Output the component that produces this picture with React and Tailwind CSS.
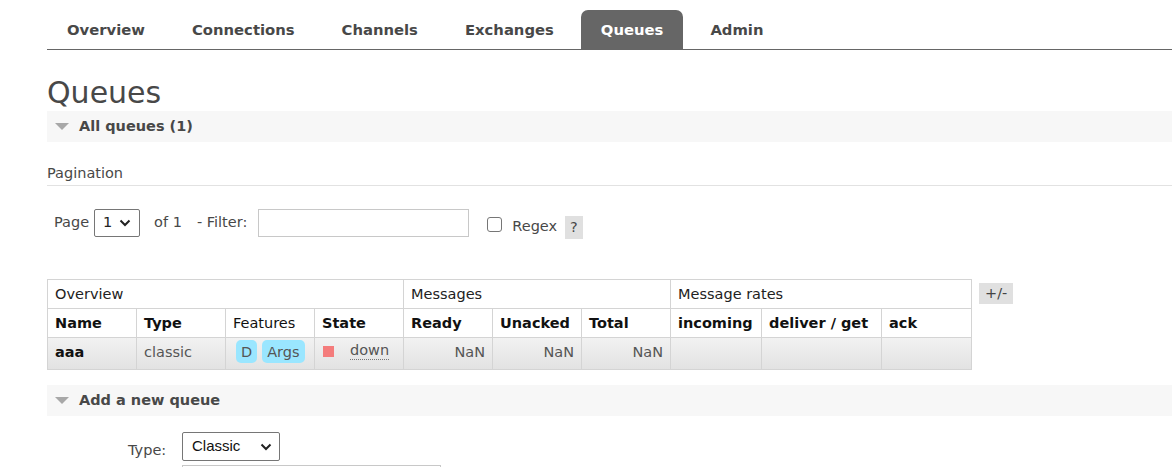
import React from 'react';

const tabs = ['Overview', 'Connections', 'Channels', 'Exchanges', 'Queues', 'Admin'];

const Triangle = () => (
  <svg width="14" height="9" viewBox="0 0 14 9" className="shrink-0">
    <polygon points="0,1 14,1 7,8" fill="#a8a8a8" />
  </svg>
);

const SectionHeader = ({ title }) => (
  <div className="flex items-center gap-[10px] h-[31px] bg-[#f7f7f7] pl-[8px] font-bold text-[14.5px] text-[#484848]">
    <Triangle />
    <span className="mt-[1px]">{title}</span>
  </div>
);

const Chevron = () => (
  <svg width="12" height="8" viewBox="0 0 12 8">
    <path d="M1.5 1.5 L6 6 L10.5 1.5" fill="none" stroke="#222" strokeWidth="2" />
  </svg>
);

export default function App() {
  return (
    <div className="min-h-screen bg-white text-[#484848] text-[14.5px] overflow-hidden" style={{ fontFamily: "'DejaVu Sans', Verdana, sans-serif" }}>
      {/* Tabs */}
      <div className="pl-[47px] pt-[10px]">
        <div className="flex gap-[7px] border-b border-[#666] h-[40px]">
          {tabs.map(t => (
            <div
              key={t}
              className={
                'flex items-center px-[20px] pt-[2px] h-[39px] rounded-t-[7px] font-bold text-[14.8px] ' +
                (t === 'Queues' ? 'bg-[#666] text-white' : 'text-[#484848]')
              }
            >
              {t}
            </div>
          ))}
        </div>
      </div>

      <div className="pl-[47px]">
        <h1 className="text-[30px] leading-[36px] mt-[25px] text-[#484848]">Queues</h1>
        <SectionHeader title="All queues (1)" />

        <div className="mt-[22px] pb-[3px] border-b border-[#e2e2e2] leading-[18px]">Pagination</div>

        {/* Pagination controls */}
        <div className="flex items-center mt-[23px] pl-[7px] h-[28px]">
          <span>Page</span>
          <div className="ml-[5px] w-[46px] h-[28px] border border-[#767676] rounded-[2px] flex items-center justify-between px-[8px] text-[#222]">
            <span>1</span>
            <Chevron />
          </div>
          <span className="ml-[14px]">of 1</span>
          <span className="ml-[15px]">- Filter:</span>
          <div className="ml-[11px] w-[211px] h-[28px] border border-[#c8c8c8]" />
          <div className="ml-[18px] w-[15px] h-[15px] border border-[#767676] rounded-[3px] mt-[2px]" />
          <span className="ml-[10px] mt-[7px]">Regex</span>
          <span className="ml-[8px] mt-[8px] bg-[#e0e0e0] px-[5px] h-[23px] leading-[23px]">?</span>
        </div>

        {/* Table */}
        <div className="flex items-start mt-[42px]">
          <table className="border-collapse text-[14.5px]">
            <thead>
              <tr className="h-[29px]">
                <th colSpan={4} className="border border-[#d4d4d4] text-left font-normal pl-[7px] pt-[1px] text-[#222]">Overview</th>
                <th colSpan={3} className="border border-[#d4d4d4] text-left font-normal pl-[7px] pt-[1px] text-[#222]">Messages</th>
                <th colSpan={3} className="border border-[#d4d4d4] text-left font-normal pl-[7px] pt-[1px] text-[#222]">Message rates</th>
              </tr>
              <tr className="h-[29px] text-[#111]">
                <th className="border border-[#d4d4d4] text-left pl-[7px] pt-[2px] w-[89px]">Name</th>
                <th className="border border-[#d4d4d4] text-left pl-[7px] pt-[2px] w-[89px]">Type</th>
                <th className="border border-[#d4d4d4] text-left pl-[7px] pt-[2px] w-[89px] font-normal">Features</th>
                <th className="border border-[#d4d4d4] text-left pl-[7px] pt-[2px] w-[89px]">State</th>
                <th className="border border-[#d4d4d4] text-left pl-[7px] pt-[2px] w-[89px]">Ready</th>
                <th className="border border-[#d4d4d4] text-left pl-[7px] pt-[2px] w-[89px]">Unacked</th>
                <th className="border border-[#d4d4d4] text-left pl-[7px] pt-[2px] w-[89px]">Total</th>
                <th className="border border-[#d4d4d4] text-left pl-[7px] pt-[2px] w-[91px]">incoming</th>
                <th className="border border-[#d4d4d4] text-left pl-[7px] pt-[2px] w-[120px]">deliver / get</th>
                <th className="border border-[#d4d4d4] text-left pl-[7px] pt-[2px] w-[90px]">ack</th>
              </tr>
            </thead>
            <tbody>
              <tr className="h-[32px] bg-gradient-to-b from-[#f2f2f2] to-[#e2e2e2] align-top">
                <td className="border border-[#d4d4d4] pl-[7px] pt-[4px] font-bold text-[#111]">aaa</td>
                <td className="border border-[#d4d4d4] pl-[7px] pt-[4px] text-[#555]">classic</td>
                <td className="border border-[#d4d4d4] pl-[10px] pt-[2px]">
                  <div className="flex gap-[5px]">
                    <span className="bg-[#9ae6ff] rounded-[5px] px-[5px] h-[23px] leading-[24px] text-[#555]">D</span>
                    <span className="bg-[#9ae6ff] rounded-[5px] px-[5px] h-[23px] leading-[24px] text-[#555]">Args</span>
                  </div>
                </td>
                <td className="border border-[#d4d4d4] pl-[8px] pt-[4px]">
                  <div className="flex items-center">
                    <span className="w-[11px] h-[11px] bg-[#f47c7c]" />
                    <span className="ml-[16px] border-b border-dotted border-[#777] leading-[17px] text-[#555]">down</span>
                  </div>
                </td>
                <td className="border border-[#d4d4d4] text-right pr-[7px] pt-[4px] text-[#555]">NaN</td>
                <td className="border border-[#d4d4d4] text-right pr-[7px] pt-[4px] text-[#555]">NaN</td>
                <td className="border border-[#d4d4d4] text-right pr-[7px] pt-[4px] text-[#555]">NaN</td>
                <td className="border border-[#d4d4d4]" />
                <td className="border border-[#d4d4d4]" />
                <td className="border border-[#d4d4d4]" />
              </tr>
            </tbody>
          </table>
          <span className="ml-[7px] mt-[4px] bg-[#e0e0e0] px-[6px] h-[21px] leading-[21px] text-[#444]">+/-</span>
        </div>

        <div className="mt-[15px]">
          <SectionHeader title="Add a new queue" />
        </div>

        {/* Add queue form */}
        <div className="flex items-start mt-[16px]">
          <span className="ml-[81px] mt-[8px] w-[54px]">Type:</span>
          <div className="flex flex-col">
            <div className="w-[98px] h-[29px] border border-[#767676] rounded-[2px] flex items-center justify-between pl-[9px] pr-[7px] text-[#111]" style={{ fontFamily: "'Liberation Sans', Arial, sans-serif" }}>
              <span className="text-[15px]">Classic</span>
              <Chevron />
            </div>
            <div className="mt-[4px] w-[259px] h-[28px] border border-[#c8c8c8]" />
          </div>
        </div>
      </div>
    </div>
  );
}
